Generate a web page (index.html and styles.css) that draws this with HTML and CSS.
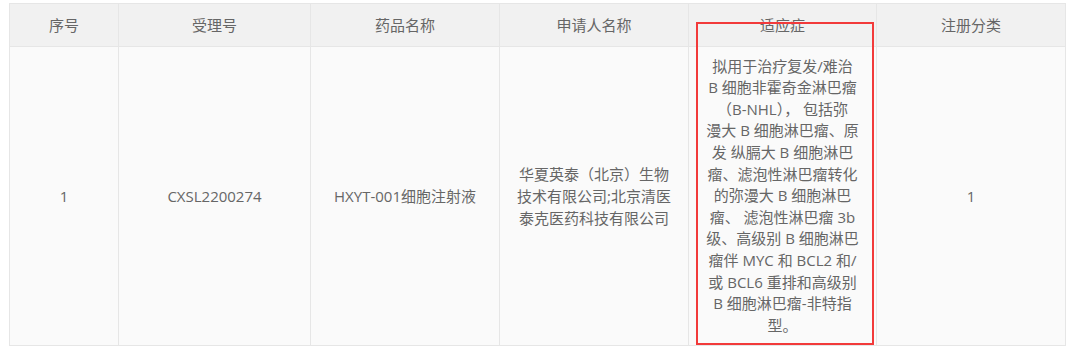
FILE: index.html
```html
<!DOCTYPE html>
<html lang="zh">
<head>
<meta charset="utf-8">
<link rel="stylesheet" href="styles.css">
</head>
<body>
<div class="wrap">
  <table class="grid">
    <colgroup>
      <col class="c1"><col class="c2"><col class="c3"><col class="c4"><col class="c5"><col class="c6">
    </colgroup>
    <thead>
      <tr>
        <th>序号</th>
        <th>受理号</th>
        <th>药品名称</th>
        <th>申请人名称</th>
        <th>适应症</th>
        <th>注册分类</th>
      </tr>
    </thead>
    <tbody>
      <tr>
        <td>1</td>
        <td>CXSL2200274</td>
        <td>HXYT-001细胞注射液</td>
        <td class="multi">
          <span class="ln">华夏英泰（北京）生物</span>
          <span class="ln">技术有限公司;北京清医</span>
          <span class="ln">泰克医药科技有限公司</span>
        </td>
        <td class="multi indication">
          <span class="ln">拟用于治疗复发/难治</span>
          <span class="ln">B 细胞非霍奇金淋巴瘤</span>
          <span class="ln">（B-NHL）， 包括弥</span>
          <span class="ln">漫大 B 细胞淋巴瘤、原</span>
          <span class="ln">发 纵膈大 B 细胞淋巴</span>
          <span class="ln">瘤、滤泡性淋巴瘤转化</span>
          <span class="ln">的弥漫大 B 细胞淋巴</span>
          <span class="ln">瘤、 滤泡性淋巴瘤 3b</span>
          <span class="ln">级、高级别 B 细胞淋巴</span>
          <span class="ln">瘤伴 MYC 和 BCL2 和/</span>
          <span class="ln">或 BCL6 重排和高级别</span>
          <span class="ln">B 细胞淋巴瘤-非特指</span>
          <span class="ln">型。</span>
        </td>
        <td>1</td>
      </tr>
    </tbody>
  </table>
  <div class="mark"></div>
</div>
</body>
</html>
```

FILE: styles.css
```css
html, body {
  margin: 0;
  padding: 0;
  background: #ffffff;
}
body {
  padding: 3px 0 0 9px;
  font-family: "Open Sans", "Noto Sans CJK SC", sans-serif;
  color: #666666;
  font-size: 15px;
}
.wrap {
  position: relative;
  width: 1056px;
}
.grid {
  border-collapse: collapse;
  table-layout: fixed;
  width: 1056px;
}
.c1 { width: 109px; }
.c2 { width: 192px; }
.c3 { width: 189px; }
.c4 { width: 189px; }
.c5 { width: 188px; }
.c6 { width: 189px; }
.grid th, .grid td {
  border: 1px solid #e6e6e6;
  text-align: center;
  vertical-align: middle;
  white-space: nowrap;
}
.grid th {
  background: #f1f1f1;
  font-weight: normal;
  height: 42px;
  padding: 0;
  line-height: 20px;
  color: #666666;
}
.grid td {
  background: #fafafa;
  height: 298px;
  padding: 0;
  line-height: 22px;
}
.grid td.multi {
  padding: 0;
}
.ln {
  display: block;
  height: 22px;
  line-height: 22px;
}
.indication {
  padding-top: 4px;
}
.indication .ln {
  height: 21.6px;
  line-height: 21.6px;
}
.mark {
  position: absolute;
  left: 687px;
  top: 19px;
  width: 174px;
  height: 319px;
  border: 2px solid #f23a3a;
}
```
